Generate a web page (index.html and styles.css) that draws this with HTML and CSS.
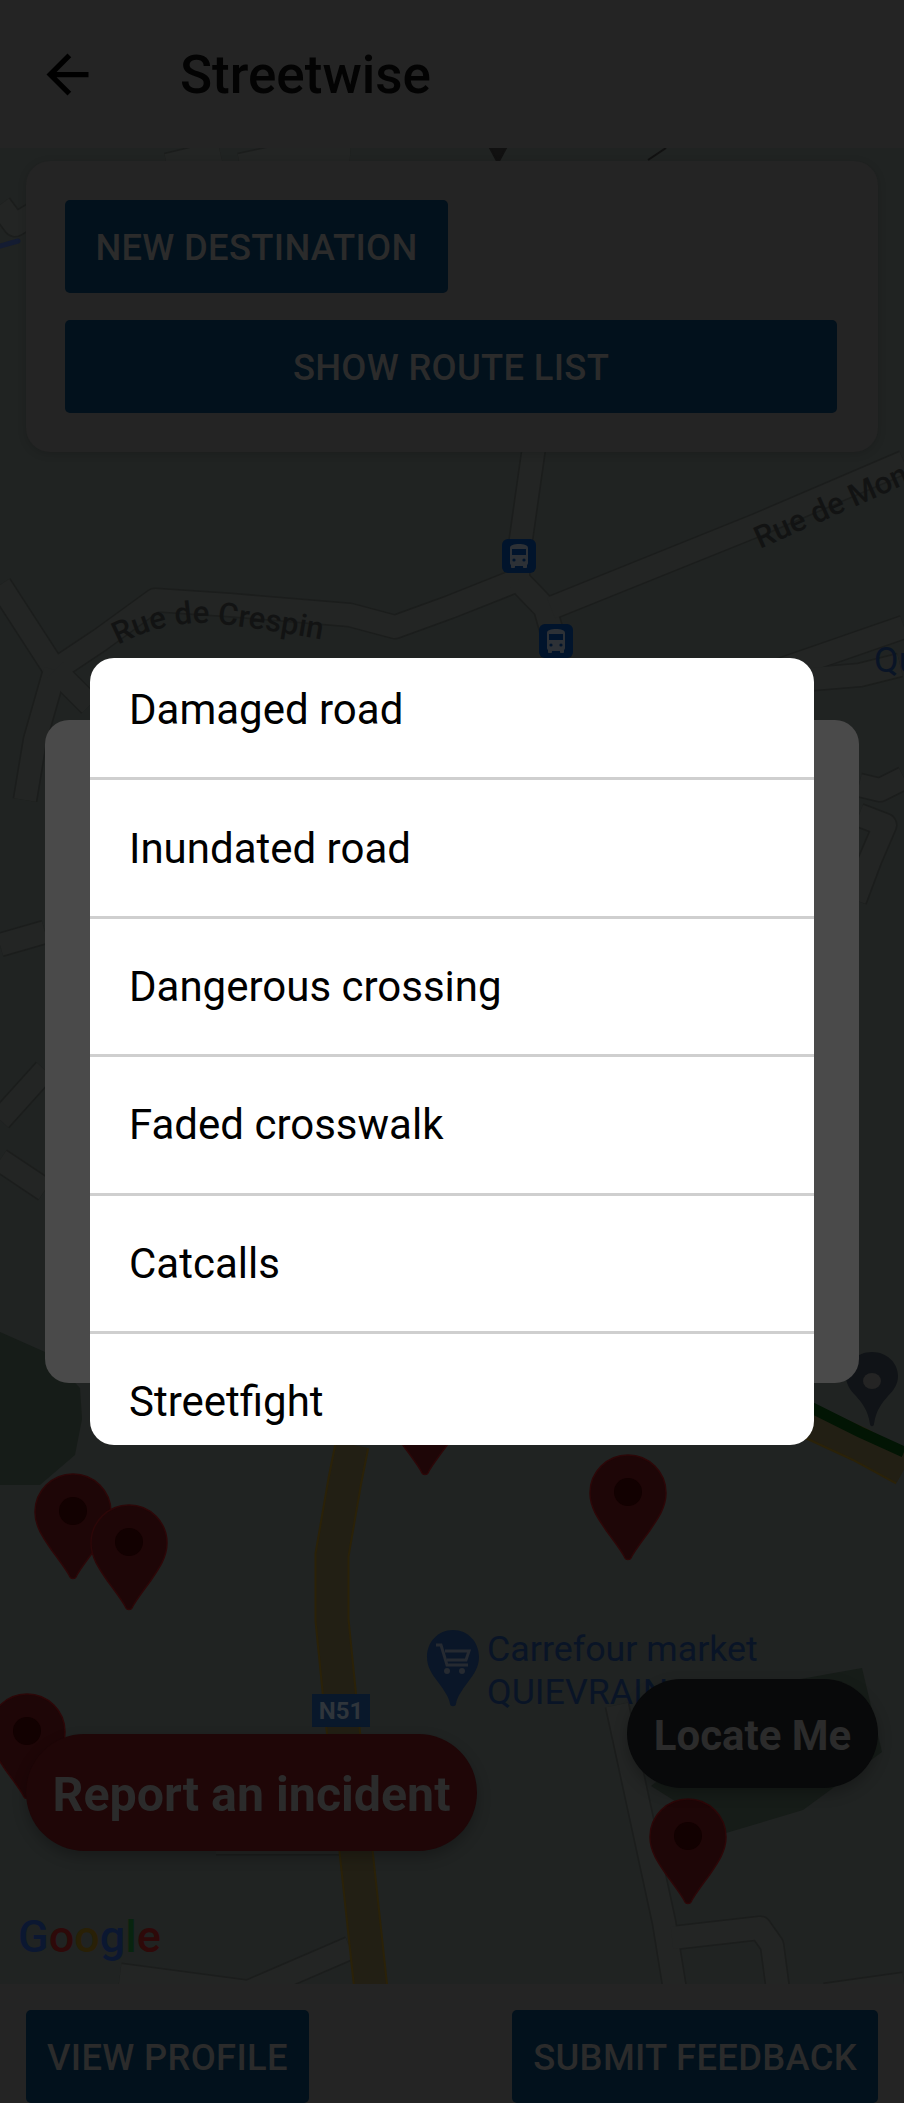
FILE: index.html
```html
<!DOCTYPE html>
<html lang="en">
<head>
    <meta charset="UTF-8">
    <meta name="viewport" content="width=device-width, initial-scale=1.0">
    <title>Streetwise</title>
    <link rel="stylesheet" href="styles.css">
</head>
<body>
<div class="page">

    <header class="app-bar">
        <svg class="back-icon" viewBox="0 0 24 24"><path d="M20 11H7.83l5.59-5.59L12 4l-8 8 8 8 1.41-1.41L7.83 13H20v-2z"/></svg>
        <h1 class="app-title">Streetwise</h1>
    </header>

    <main class="map-area">
        <!-- map drawn in page coordinates, so the viewBox starts at the bar height -->
        <svg class="map" viewBox="0 148 904 1836">
            <defs>
                <path id="pin" d="M0-38C21-38 38-21 38 0 38 15 29 27 20 40 11 52 5 60 3 65 2 67-2 67-3 65-5 60-11 52-20 40-29 27-38 15-38 0-38-21-21-38 0-38z"/>
                <g id="bus">
                    <rect class="bus-bg" width="34" height="34" rx="6"/>
                    <path class="bus-body" d="M8 9c0-3 4-4 9-4s9 1 9 4v15c0 1-.6 1.6-1 2v2c0 .6-.4 1-1 1h-2c-.6 0-1-.4-1-1v-1h-8v1c0 .6-.4 1-1 1h-2c-.6 0-1-.4-1-1v-2c-.4-.4-1-1-1-2z"/>
                    <rect class="bus-bg" x="10" y="10" width="14" height="6"/>
                    <circle class="bus-bg" cx="12" cy="21" r="1.6"/>
                    <circle class="bus-bg" cx="22" cy="21" r="1.6"/>
                </g>
                <!-- small streets, stroked twice below -->
                <g id="streets">
                    <path d="M535 440 518 560 518 580 450 607 395 627 350 615 230 605 155 600 100 640 55 670 0 585"/>
                    <path d="M55 670 35 740 25 800"/>
                    <path d="M55 670 90 705"/>
                    <path d="M518 580 545 608 560 660"/>
                    <path d="M551 608 757 525 904 462"/>
                    <path d="M780 670 904 627"/>
                    <path d="M800 680 860 675 900 665"/>
                    <path d="M45 1070 0 1120"/>
                    <path d="M0 1160 45 1190"/>
                    <path d="M0 945 45 932"/>
                    <path d="M859 815 885 825 870 860 855 900"/>
                    <path d="M859 785 880 790 904 778"/>
                    <path d="M120 1975 248 1992 350 1948"/>
                    <path d="M216 1843 340 1843"/>
                    <path d="M617 1705 664 1922 675 1990"/>
                    <path d="M672 1938 760 1928 772 1945 778 1990"/>
                    <path d="M825 1995 904 1984"/>
                    <path d="M0 205 15 225 40 210"/>
                    <path d="M167 165 220 152"/>
                    <path d="M240 165 300 152 350 156"/>
                </g>
            </defs>

            <path class="park" d="M0 1332 45 1352 80 1388 82 1419 75 1455 40 1485 0 1485z"/>
            <path class="park" d="M862 1668 882 1752 803 1810 726 1833 651 1786 784 1682z"/>

            <use class="road-edge" href="#streets"/>
            <use class="road-fill" href="#streets"/>
            <path class="blue-line" d="M0 246 18 241"/>

            <!-- N51 and the motorway -->
            <path class="main-edge" d="M352 1445 345 1480 332 1555 332 1620 340 1700 357 1860 371 1990"/>
            <path class="main-fill" d="M352 1445 345 1480 332 1555 332 1620 340 1700 357 1860 371 1990"/>
            <path class="main-edge" d="M806 1420 860 1445 904 1469"/>
            <path class="main-fill" d="M806 1420 860 1445 904 1469"/>
            <path class="traffic" d="M810 1407 860 1432 904 1452"/>

            <path id="crespin" class="hidden-path" d="M118 645Q170 618 220 624T335 642"/>
            <text class="street-name">
                <textPath href="#crespin">Rue de Crespin</textPath>
            </text>
            <text class="street-name" transform="translate(760 549) rotate(-24)">Rue de Mon</text>
            <text class="poi-name" x="874" y="672">Qu</text>

            <use href="#bus" x="502" y="539"/>
            <use href="#bus" x="539" y="624"/>

            <path class="tip" d="M490 148H506L499 161H497z"/>
            <path class="tip" d="M648 160 666 148"/>

            <!-- place pin behind the dialog -->
            <path class="place-pin" d="M872 1352c15 0 26 11 26 24 0 8-4 14-10 20-6 7-12 14-14 28-.4 3-3.600 3-4 0-2-14-8-21-14-28-6-6-10-12-10-20 0-13 11-24 26-24z"/>
            <ellipse class="place-hole" cx="872" cy="1381" rx="9" ry="8"/>

            <use class="pin" href="#pin" x="73" y="1512"/>
            <circle class="pin-dot" cx="73" cy="1511" r="14"/>
            <use class="pin" href="#pin" x="129" y="1543"/>
            <circle class="pin-dot" cx="129" cy="1542" r="14"/>
            <use class="pin" href="#pin" x="425" y="1408"/>
            <use class="pin" href="#pin" x="628" y="1493"/>
            <circle class="pin-dot" cx="628" cy="1492" r="14"/>
            <use class="pin" href="#pin" x="688" y="1837"/>
            <circle class="pin-dot" cx="688" cy="1836" r="14"/>
            <use class="pin" href="#pin" x="27" y="1732"/>
            <circle class="pin-dot" cx="27" cy="1731" r="14"/>

            <!-- shop -->
            <path class="poi-pin" d="M453 1630c15 0 26 12 26 27 0 10-5 17-11 25-6 8-11 15-12 22-.4 3-5.600 3-6 0-1-7-6-14-12-22-6-8-11-15-11-25 0-15 11-27 26-27z"/>
            <path class="cart" d="M436 1645h5l6 20h21M445 1651h24l-3 9h-19"/>
            <circle class="cart-dot" cx="447" cy="1671" r="3"/>
            <circle class="cart-dot" cx="462" cy="1671" r="3"/>
            <text class="poi-name" x="487" y="1661">Carrefour market</text>
            <text class="poi-name" x="487" y="1704">QUIEVRAIN</text>

            <rect class="road-badge" x="312" y="1694" width="58" height="33"/>
            <text class="road-badge-text" x="341" y="1719">N51</text>

            <text class="google" x="18" y="1952"><tspan class="g-blue">G</tspan><tspan class="g-red">o</tspan><tspan class="g-yellow">o</tspan><tspan class="g-blue">g</tspan><tspan class="g-green">l</tspan><tspan class="g-red">e</tspan></text>
        </svg>

        <section class="route-card">
            <button class="btn btn-fit">New destination</button>
            <button class="btn btn-wide">Show route list</button>
        </section>

        <button class="pill pill-locate">Locate Me</button>
        <button class="pill pill-report">Report an incident</button>
    </main>

    <footer class="bottom-bar">
        <button class="btn btn-small">View profile</button>
        <button class="btn btn-small">Submit feedback</button>
    </footer>

    <!-- report dialog with the spinner list open over it -->
    <div class="overlay">
        <div class="dialog-back"></div>
        <div class="dialog-list">
            <ul class="incident-list">
                <li>Damaged road</li>
                <li>Inundated road</li>
                <li>Dangerous crossing</li>
                <li>Faded crosswalk</li>
                <li>Catcalls</li>
                <li>Streetfight</li>
            </ul>
        </div>
    </div>

</div>
</body>
</html>
```
FILE: styles.css
```css
* {
    box-sizing: border-box;
}
html, body {
    margin: 0;
    padding: 0;
    background-color: #242424;
}
.page {
    position: relative;
    width: 904px;
    height: 2103px;
    overflow: hidden;
    display: flex;
    flex-direction: column;
    font-family: Roboto, "Liberation Sans", sans-serif;
}

/* top bar */
.app-bar {
    height: 148px;
    flex: none;
    display: flex;
    align-items: center;
    padding-left: 36px;
    background-color: #242424;
}
.back-icon {
    width: 63px;
    height: 63px;
    fill: #000;
}
.app-title {
    margin: 2px 0 0 81px;
    font-size: 53px;
    font-weight: 500;
    color: #030303;
}

/* map */
.map-area {
    position: relative;
    flex: 1;
    background-color: #202322;
}
.map {
    display: block;
    width: 904px;
    height: 1836px;
}
.park {
    fill: #161c18;
}
.road-edge, .road-fill {
    fill: none;
    stroke-linejoin: round;
}
.road-edge {
    stroke: #1b1d1c;
    stroke-width: 25px;
}
.road-fill {
    stroke: #232524;
    stroke-width: 22px;
}
.blue-line {
    stroke: #141c32;
    stroke-width: 5px;
    stroke-linecap: round;
}
.main-edge {
    fill: none;
    stroke: #2b2208;
    stroke-width: 35px;
}
.main-fill {
    fill: none;
    stroke: #221f14;
    stroke-width: 31px;
}
.traffic {
    fill: none;
    stroke: #021504;
    stroke-width: 11px;
}
.hidden-path {
    fill: none;
}
.tip {
    fill: #111;
    stroke: #111;
    stroke-width: 2px;
}
.street-name {
    font-size: 31px;
    font-weight: 500;
    fill: #121313;
}
.poi-name {
    font-size: 35.8px;
    fill: #091426;
}
.bus-bg {
    fill: #01142c;
}
.bus-body {
    fill: #2d3136;
}
.pin {
    fill: #1e0607;
    stroke: #2c0708;
    stroke-width: 1.5px;
}
.pin-dot {
    fill: #120101;
}
.place-pin {
    fill: #101317;
}
.place-hole {
    fill: #242424;
}
.poi-pin {
    fill: #0a1628;
}
.cart {
    fill: none;
    stroke: #262a31;
    stroke-width: 3px;
}
.cart-dot {
    fill: #262a31;
}
.road-badge {
    fill: #09182b;
}
.road-badge-text {
    font-size: 24px;
    font-weight: 700;
    text-anchor: middle;
    fill: #2f353b;
}
.google {
    font-size: 45px;
    font-weight: 500;
}
.g-blue { fill: #0b1731; }
.g-red { fill: #2e0909; }
.g-yellow { fill: #292006; }
.g-green { fill: #08240f; }

/* buttons */
.btn {
    height: 93px;
    border: 0;
    border-radius: 5px;
    background-color: #02111c;
    color: #2b2b2b;
    font-family: inherit;
    font-size: 36.4px;
    font-weight: 500;
    letter-spacing: 0.3px;
    text-transform: uppercase;
    padding: 2px 0 0;
}
.route-card {
    position: absolute;
    top: 13px;
    left: 26px;
    width: 852px;
    height: 291px;
    padding: 39px 39px 0;
    border-radius: 24px;
    background-color: #242424;
    box-shadow: 0 2px 8px rgba(0, 0, 0, 0.15);
    display: flex;
    flex-direction: column;
    align-items: flex-start;
    gap: 27px;
}
.btn-fit {
    width: 383px;
}
.btn-wide {
    width: 772px;
}

/* floating actions */
.pill {
    position: absolute;
    border: 0;
    font-family: inherit;
    font-weight: 700;
    color: #2b2b2b;
    padding: 4px 0 0;
    box-shadow: 0 6px 14px rgba(0, 0, 0, 0.25);
}
.pill-locate {
    left: 627px;
    top: 1531px;
    width: 251px;
    height: 109px;
    border-radius: 55px;
    background-color: #08090a;
    font-size: 42px;
}
.pill-report {
    left: 26px;
    top: 1586px;
    width: 451px;
    height: 117px;
    border-radius: 59px;
    background-color: #1f0607;
    font-size: 48.3px;
}

/* bottom buttons */
.bottom-bar {
    height: 119px;
    flex: none;
    display: flex;
    justify-content: space-between;
    padding: 26px 26px 0;
    background-color: #242424;
}
.btn-small {
    padding: 2px 21px 0;
}

/* dialogs */
.overlay {
    position: absolute;
    inset: 0;
    display: grid;
    place-items: center;
}
.dialog-back, .dialog-list {
    grid-area: 1 / 1;
    border-radius: 24px;
}
.dialog-back {
    width: 814px;
    height: 663px;
    background-color: #4a4a4a;
}
.dialog-list {
    width: 724px;
    height: 787px;
    background-color: #fff;
    overflow: hidden;
}
.incident-list {
    list-style: none;
    margin: -16px 0 0;
    padding: 0;
}
.incident-list li {
    height: 138.4px;
    display: flex;
    align-items: center;
    padding-left: 39px;
    font-size: 42px;
    color: #000;
    border-bottom: 3px solid #cfcfcf;
}
```
